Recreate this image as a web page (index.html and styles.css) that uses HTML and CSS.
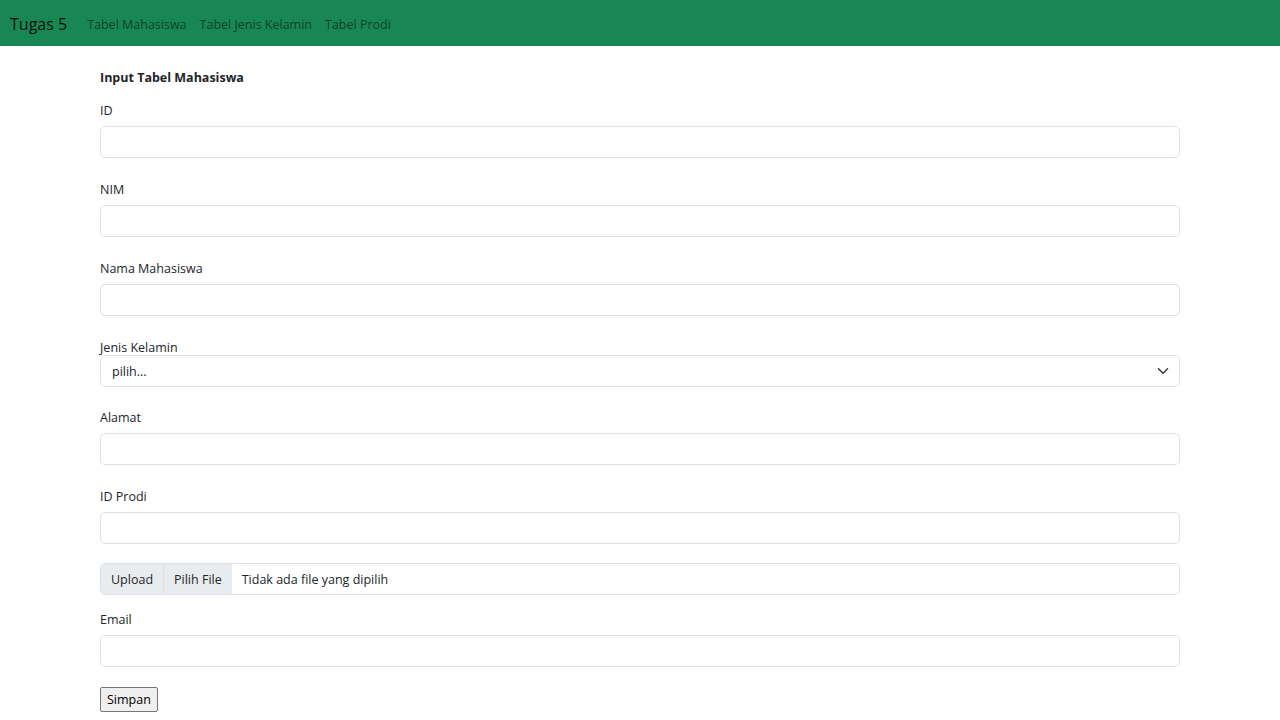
FILE: index.html
```html
<!DOCTYPE html>
<html lang="id">
<head>
<meta charset="utf-8">
<title>Tugas 5</title>
<link rel="stylesheet" href="styles.css">
</head>
<body>
<nav class="navbar">
  <a class="brand" href="#">Tugas 5</a>
  <a class="nav-link" href="#">Tabel Mahasiswa</a>
  <a class="nav-link" href="#">Tabel Jenis Kelamin</a>
  <a class="nav-link" href="#">Tabel Prodi</a>
</nav>
<main class="container">
  <h1 class="title">Input Tabel Mahasiswa</h1>
  <div class="group">
    <label class="form-label">ID</label>
    <div class="form-control"></div>
  </div>
  <div class="group">
    <label class="form-label">NIM</label>
    <div class="form-control"></div>
  </div>
  <div class="group">
    <label class="form-label">Nama Mahasiswa</label>
    <div class="form-control"></div>
  </div>
  <div class="group tight">
    <label class="plain-label">Jenis Kelamin</label>
    <div class="form-select">
      <span>pilih...</span>
      <svg class="chev" width="16" height="16" viewBox="0 0 16 16"><path d="M2 5l6 6 6-6" fill="none" stroke="#343a40" stroke-width="2" stroke-linecap="round" stroke-linejoin="round"/></svg>
    </div>
  </div>
  <div class="group">
    <label class="form-label">Alamat</label>
    <div class="form-control"></div>
  </div>
  <div class="group tight">
    <label class="form-label">ID Prodi</label>
    <div class="form-control"></div>
  </div>
  <div class="file-group">
    <span class="ig-text">Upload</span>
    <span class="file-btn">Pilih File</span>
    <span class="file-name">Tidak ada file yang dipilih</span>
  </div>
  <div class="group">
    <label class="form-label">Email</label>
    <div class="form-control"></div>
  </div>
  <button class="btn-save" type="button">Simpan</button>
</main>
</body>
</html>
```
FILE: styles.css
```css
* { box-sizing: border-box; }
html, body { margin: 0; padding: 0; }
body {
  font-family: "Open Sans", "Noto Sans", sans-serif;
  font-size: 12.5px;
  line-height: 21px;
  color: #212529;
  background: #fff;
}
.navbar {
  height: 46px;
  background: #198754;
  display: flex;
  align-items: center;
  padding: 3px 10px 0;
}
.brand {
  font-size: 16px;
  color: rgba(0,0,0,.9);
  text-decoration: none;
  margin-right: 20px;
}
.nav-link {
  font-size: 12.5px;
  color: rgba(0,0,0,.55);
  text-decoration: none;
  margin-right: 13px;
}
.container {
  width: 1080px;
  margin: 0 0 0 100px;
  padding-top: 20px;
}
.title {
  font-size: 12.5px;
  font-weight: 700;
  margin: 0 0 11px;
  padding-top: 1px;
  line-height: 21px;
}
.group { margin-bottom: 20px; }
.group.tight { margin-bottom: 19px; }
.form-label { display: block; padding-top: 1px; margin-bottom: 5px; }
.plain-label { display: block; padding-top: 1px; margin-bottom: -3px; }
.form-control, .form-select {
  height: 32px;
  border: 1px solid #dee2e6;
  border-radius: 5px;
  background: #fff;
}
.form-select {
  display: flex;
  align-items: center;
  justify-content: space-between;
  padding: 0 10px 0 11px;
}
.chev { width: 12px; height: 12px; }
.file-group {
  display: flex;
  height: 32px;
  border: 1px solid #dee2e6;
  border-radius: 5px;
  overflow: hidden;
  margin-bottom: 13px;
  align-items: stretch;
}
.ig-text, .file-btn {
  background: #e9ecef;
  display: flex;
  align-items: center;
  padding: 1px 10px 0;
}
.ig-text { border-right: 1px solid #dee2e6; }
.file-name { display: flex; align-items: center; padding: 1px 0 0 10px; }
.btn-save {
  font-family: inherit;
  font-size: 12.5px;
  line-height: 18px;
  height: 25px;
  padding: 1px 6px 0;
  background: #efefef;
  border: 1px solid #767676;
  border-radius: 2px;
  color: #000;
}
```
